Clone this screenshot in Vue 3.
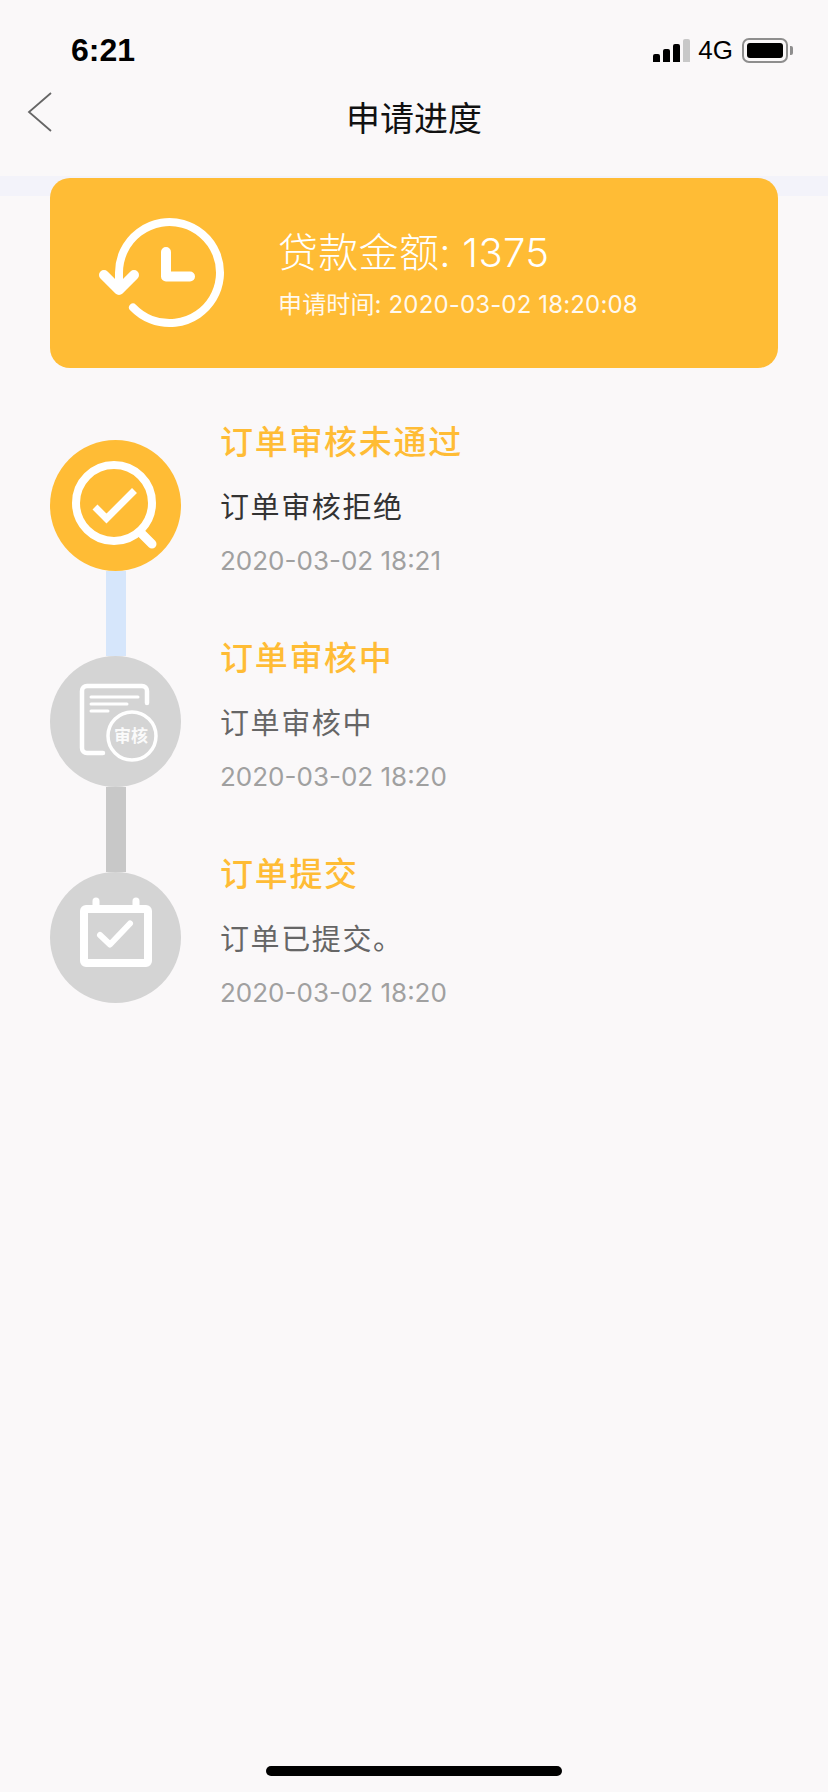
<template>
  <div class="page">
    <div class="status-bar">
      <span class="clock">6:21</span>
      <div class="status-right">
        <div class="signal">
          <i class="bar b1"></i><i class="bar b2"></i><i class="bar b3"></i><i class="bar b4"></i>
        </div>
        <span class="network">4G</span>
        <div class="battery"><div class="battery-fill"></div></div>
        <div class="battery-cap"></div>
      </div>
    </div>

    <div class="nav">
      <svg class="back" viewBox="0 0 26 40" width="26" height="40" fill="none" stroke="#666" stroke-width="1.8">
        <path d="M24 1L2 20l22 19" />
      </svg>
      <span class="nav-title">申请进度</span>
    </div>

    <div class="band">
      <div class="summary">
        <svg class="summary-icon" viewBox="0 0 132 118" width="132" height="118" fill="none" stroke="#fff" stroke-width="8" stroke-linecap="round" stroke-linejoin="round">
          <path d="M23 74V58.500A50.500 50.500 0 1 1 37 93.500" />
          <path d="M8 61l15 15 15-15" stroke-width="10" />
          <path d="M70 38v24.500h24" stroke-width="10" />
        </svg>
        <div class="summary-text">
          <div class="amount">贷款金额: 1375</div>
          <div class="apply-time">申请时间: 2020-03-02 18:20:08</div>
        </div>
      </div>
    </div>

    <div class="steps">
      <div v-for="(step, i) in steps" :key="step.title" class="step">
        <div class="rail">
          <div class="dot" :class="{ on: step.active }">
            <svg v-if="step.icon === 'search'" viewBox="0 0 131 131" width="131" height="131" fill="none" stroke="#fff" stroke-linecap="round">
              <circle cx="64" cy="63" r="38" stroke-width="8" />
              <path d="M91 93l11 11" stroke-width="9" />
              <path d="M45 67l11.500 11.500 28-28" stroke-width="7" stroke-linecap="butt" />
            </svg>
            <svg v-else-if="step.icon === 'doc'" viewBox="0 0 131 131" width="131" height="131" fill="none" stroke="#fff" stroke-linecap="round">
              <path d="M53 97H37a5 5 0 0 1-5-5V35a5 5 0 0 1 5-5h55a5 5 0 0 1 5 5v12" stroke-width="4.500" />
              <path d="M41 41h47M41 48h36M41 55h17" stroke-width="3" />
              <circle cx="82" cy="80" r="24" stroke-width="3.500" />
              <text x="81" y="86" class="doc-label" text-anchor="middle">审核</text>
            </svg>
            <svg v-else viewBox="0 0 131 131" width="131" height="131" fill="none" stroke="#fff" stroke-linecap="round" stroke-linejoin="round">
              <rect x="34" y="37" width="64" height="54" rx="2" stroke-width="8" />
              <path d="M46 29v6M86 29v6" stroke-width="7" />
              <path d="M50 63l10 9.500 20-21" stroke-width="6" />
            </svg>
          </div>
          <div v-if="i < steps.length - 1" class="link" :class="{ on: step.active }"></div>
        </div>
        <div class="step-text">
          <div class="step-title">{{ step.title }}</div>
          <div class="step-desc" :class="{ on: step.active }">{{ step.desc }}</div>
          <div class="step-date">{{ step.date }}</div>
        </div>
      </div>
    </div>

    <div class="home-wrap"><div class="home-bar"></div></div>
  </div>
</template>

<script setup>
const steps = [
  { title: '订单审核未通过', desc: '订单审核拒绝', date: '2020-03-02 18:21', icon: 'search', active: true },
  { title: '订单审核中', desc: '订单审核中', date: '2020-03-02 18:20', icon: 'doc', active: false },
  { title: '订单提交', desc: '订单已提交。', date: '2020-03-02 18:20', icon: 'calendar', active: false },
]
</script>

<style>
html, body { margin: 0; background: #faf8f9; }
</style>

<style scoped>
.page {
  width: 828px; height: 1792px; background: #faf8f9; display: flex; flex-direction: column;
  font-family: Inter, "Noto Sans CJK SC", sans-serif; overflow: hidden;
}
.status-bar {
  height: 82px; box-sizing: border-box; padding: 31px 35px 0 71px; flex-shrink: 0;
  display: flex; justify-content: space-between; align-items: flex-start;
}
.clock { font: 700 32px/38px "Liberation Sans", sans-serif; color: #000; }
.status-right { display: flex; align-items: center; height: 38px; }
.signal { display: flex; align-items: flex-end; gap: 3px; height: 23px; }
.bar { display: block; width: 7px; background: #000; border-radius: 2px 2px 0 0; }
.b1 { height: 8px; }
.b2 { height: 13px; }
.b3 { height: 18px; }
.b4 { height: 23px; background: #c8c8c8; }
.network { font: 400 26px/38px "Liberation Sans", sans-serif; color: #000; margin-left: 8px; }
.battery {
  width: 36px; height: 15px; margin-left: 9px; padding: 3px; box-sizing: content-box;
  border: 2px solid #8e8e8e; border-radius: 7px;
}
.battery-fill { width: 100%; height: 100%; background: #000; border-radius: 3px; }
.battery-cap { width: 3px; height: 9px; margin-left: 2px; background: #8e8e8e; border-radius: 0 2px 2px 0; }

.nav {
  height: 94px; box-sizing: border-box; padding-bottom: 21px; flex-shrink: 0; display: flex; align-items: center; justify-content: center; position: relative;
}
.back { position: absolute; left: 27px; top: 10px; }
.nav-title { font-size: 34px; line-height: 46px; color: #111; }

.band {
  height: 20px; background: #f3f3fa; padding: 0 50px; flex-shrink: 0; margin-bottom: 172px;
}
.summary {
  height: 190px; margin-top: 2px; background: #ffbc35; border-radius: 20px; display: flex; align-items: center;
  padding-left: 46px; color: #fff;
}
.summary-icon { flex-shrink: 0; margin-right: 50px; }
.summary-text { padding-top: 3px; }
.amount { font-size: 40px; line-height: 54px; font-weight: 300; letter-spacing: .3px; white-space: nowrap; }
.apply-time { font-size: 24px; line-height: 36px; letter-spacing: .15px; white-space: nowrap; opacity: .92; margin-top: 7px; }

.steps { padding: 0 50px; margin-top: 72px; }
.step { display: flex; height: 216px; }
.rail { width: 131px; flex-shrink: 0; display: flex; flex-direction: column; align-items: center; margin-right: 39px; }
.dot { width: 131px; height: 131px; border-radius: 50%; background: #d4d4d4; flex-shrink: 0; }
.dot svg { display: block; }
.dot.on { background: #ffbc35; }
.doc-label { font-size: 17px; font-weight: 700; fill: #fff; stroke: none; opacity: .9; }
.link { width: 20px; height: 85px; background: #c8c8c8; }
.link.on { background: #d6e6fb; }
.step-text { margin-top: -21px; white-space: nowrap; }
.step-title { font-size: 33px; line-height: 46px; letter-spacing: 1.7px; font-weight: 500; color: #ffbc35; }
.step-desc { font-size: 29px; line-height: 40px; letter-spacing: 1.6px; color: #666; margin-top: 23px; }
.step-desc.on { color: #333; }
.step-date { font-size: 26px; line-height: 36px; color: #a0a0a0; margin-top: 15px; }

.home-wrap { margin-top: auto; height: 26px; flex-shrink: 0; display: flex; justify-content: center; }
.home-bar { width: 296px; height: 10px; border-radius: 5px; background: #000; }
</style>
